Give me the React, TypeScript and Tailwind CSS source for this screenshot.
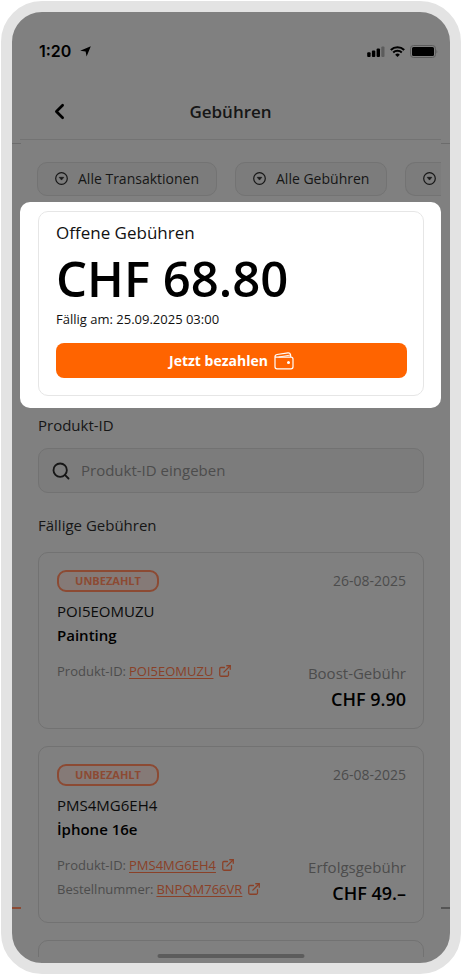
import { ChevronLeft, ExternalLink, Search } from 'lucide-react';

type FeeLink = {
  label: string;
  value: string;
};

type Fee = {
  code: string;
  title: string;
  date: string;
  kind: string;
  amount: string;
  links: FeeLink[];
};

const fees: Fee[] = [
  {
    code: 'POI5EOMUZU',
    title: 'Painting',
    date: '26-08-2025',
    kind: 'Boost-Gebühr',
    amount: 'CHF 9.90',
    links: [{ label: 'Produkt-ID:', value: 'POI5EOMUZU' }],
  },
  {
    code: 'PMS4MG6EH4',
    title: 'İphone 16e',
    date: '26-08-2025',
    kind: 'Erfolgsgebühr',
    amount: 'CHF 49.–',
    links: [
      { label: 'Produkt-ID:', value: 'PMS4MG6EH4' },
      { label: 'Bestellnummer:', value: 'BNPQM766VR' },
    ],
  },
];

function StatusBar() {
  return (
    <div className="flex h-[78px] shrink-0 items-center justify-between pl-[19px] pr-[3px]">
      <div className="flex items-center gap-[9px]">
        <span className="font-[Inter,sans-serif] text-base font-semibold text-black">1:20</span>
        <svg className="size-[11px]" viewBox="0 0 11 11" aria-hidden="true">
          <path d="M10.8 0.2 L6.6 10.6 L5.6 5.6 L0.2 4.8 Z" fill="#000" />
        </svg>
      </div>
      <div className="flex items-center gap-[5px]">
        <svg className="h-[11px] w-[18px]" viewBox="0 0 18 11" aria-hidden="true">
          <rect x="0.2" y="6.2" width="3.4" height="4.8" rx="1" />
          <rect x="4.9" y="4.6" width="3.4" height="6.4" rx="1" />
          <rect x="9.6" y="2.4" width="3.4" height="8.6" rx="1" />
          <rect x="14.3" y="0.5" width="3.2" height="10.5" rx="1" fill="#5c5c5c" />
        </svg>
        <svg className="h-[11px] w-[15px]" viewBox="0 0 15 11" aria-hidden="true">
          <path d="M0.8 3.9 A9.6 9.6 0 0 1 14.2 3.9" fill="none" stroke="#000" strokeWidth="2.1" />
          <path d="M3.2 6.5 A6.2 6.2 0 0 1 11.8 6.5" fill="none" stroke="#000" strokeWidth="2" />
          <path d="M7.5 11 L5.2 8.7 A3.3 3.3 0 0 1 9.8 8.7 Z" />
        </svg>
        <svg className="h-[13px] w-[28px]" viewBox="0 0 28 13" aria-hidden="true">
          <rect x="0.5" y="0.5" width="25" height="12" rx="3" fill="none" stroke="#5c5c5c" />
          <rect x="2" y="2" width="22" height="9" rx="1.5" />
          <path d="M26.5 4.5 q1.5 2 0 4 z" fill="#5c5c5c" />
        </svg>
      </div>
    </div>
  );
}

function DropIcon() {
  return (
    <svg className="size-[13px] shrink-0" viewBox="0 0 13 13" aria-hidden="true">
      <circle cx="6.5" cy="6.5" r="5.8" fill="none" stroke="#161616" strokeWidth="1.2" />
      <path d="M4.2 5.3 h4.6 l-2.3 2.8 z" fill="#161616" stroke="#161616" strokeWidth="0.6" strokeLinejoin="round" />
    </svg>
  );
}

function Chip({ label }: { label: string }) {
  return (
    <button className="flex h-[34px] shrink-0 items-center gap-[10px] rounded-[10px] border border-[#737373] bg-[#7c7c7c] px-[17px] text-sm font-medium whitespace-nowrap text-[#161616]">
      <DropIcon />
      {label}
    </button>
  );
}

function WalletIcon() {
  return (
    <svg className="h-[18px] w-5" viewBox="0 0 20 18" fill="none" stroke="#fff" strokeWidth="1.2" strokeLinejoin="round" strokeLinecap="round" aria-hidden="true">
      <path d="M1 4.6 V14.8 Q1 16.8 3 16.8 H17 Q19 16.8 19 14.8 V7.2 Q19 5.2 17 5.2 H3 Q1 5.2 1 4.1 Q1.2 2.8 3 2.5 L14 0.9 Q16 0.7 16.5 2.5 L16.9 5.2" />
      <path d="M5 5 L15.6 3.2" strokeWidth="0.9" />
      <circle cx="14.5" cy="10.6" r="0.9" fill="#fff" />
    </svg>
  );
}

function OpenFees() {
  return (
    <section className="shrink-0 rounded-[10px] bg-white pt-[9px] pr-[17px] pb-3 pl-[18px]">
      <div className="rounded-[10px] border border-[#e6e6e6] pt-[9px] pr-4 pb-[17px] pl-[17px]">
        <h2 className="text-[17px] leading-6 text-[#111]">Offene Gebühren</h2>
        <p className="text-[49px] leading-[66px] font-semibold text-black">CHF 68.80</p>
        <p className="text-[13px] leading-4 font-medium text-[#111]">Fällig am: 25.09.2025 03:00</p>
        <button className="mt-4 flex h-[35px] w-full items-center justify-center gap-[6px] rounded-lg bg-[#ff6400] text-sm font-bold text-white">
          Jetzt bezahlen
          <WalletIcon />
        </button>
      </div>
    </section>
  );
}

function FeeCard({ fee }: { fee: Fee }) {
  return (
    <article className="flex h-[177px] shrink-0 flex-col rounded-[10px] border border-[#727272] pt-[17px] pr-[17px] pb-[15px] pl-[18px]">
      <div className="flex items-center justify-between">
        <span className="flex h-[22px] w-[102px] items-center justify-center rounded-[9px] border-2 border-[#8c4a33] bg-[#857a77] text-[11px] font-bold text-[#8c4a33]">
          UNBEZAHLT
        </span>
        <span className="text-sm text-[#4c4c4c]">{fee.date}</span>
      </div>
      <p className="mt-[7px] text-[15px] leading-6 text-[#0b0b0b]">{fee.code}</p>
      <h3 className="text-[15px] leading-6 font-semibold text-black">{fee.title}</h3>
      <div className="mt-3 flex flex-1 justify-between">
        <ul className="text-[13px] leading-6 whitespace-nowrap text-[#4c4c4c]">
          {fee.links.map((link) => (
            <li key={link.label} className="flex items-center gap-[3px]">
              {link.label}
              <a href="#" className="flex items-center gap-[5px] text-[#8a4128]">
                <span className="underline underline-offset-2">{link.value}</span>
                <ExternalLink size={14} strokeWidth={2.2} />
              </a>
            </li>
          ))}
        </ul>
        <div className="self-end text-right">
          <p className="text-[15px] leading-6 text-[#4c4c4c]">{fee.kind}</p>
          <p className="text-[18px] leading-7 font-semibold text-black">{fee.amount}</p>
        </div>
      </div>
    </article>
  );
}

export default function App() {
  return (
    <div className="h-screen bg-white py-px pl-px font-['Open_Sans','Noto_Sans',sans-serif]">
      <div className="relative flex h-full flex-col overflow-hidden rounded-[41px] border-[11px] border-[#e3e3e3] bg-[#808080] pr-[9px] pb-[6px] pl-2">
        <StatusBar />
        <header className="grid h-[50px] shrink-0 grid-cols-[40px_1fr_40px] items-center border-b border-[#737373] px-5 pb-[6px]">
          <button aria-label="Zurück" className="pl-[7px]">
            <ChevronLeft size={25} strokeWidth={2.6} className="text-black" />
          </button>
          <h1 className="text-center text-[17px] font-semibold text-[#161616]">Gebühren</h1>
        </header>

        <nav className="flex h-[62px] shrink-0 items-center gap-[18px] overflow-hidden pt-4 pb-[1px] pl-[17px]">
          <Chip label="Alle Transaktionen" />
          <Chip label="Alle Gebühren" />
          <button
            aria-label="Weitere Filter"
            className="flex h-[34px] min-w-0 flex-1 items-center rounded-l-[10px] border border-r-0 border-[#737373] bg-[#7c7c7c] pl-[17px]"
          >
            <DropIcon />
          </button>
        </nav>

        <OpenFees />

        <main className="flex min-h-0 flex-1 flex-col overflow-hidden pt-[5px] pr-[17px] pl-[18px]">
          <label htmlFor="product-id" className="text-[15px] leading-6 text-[#161616]">
            Produkt-ID
          </label>
          <div className="mt-[11px] flex h-[45px] shrink-0 items-center gap-[10px] rounded-[10px] border border-[#727272] bg-[#7c7c7c] px-3">
            <Search size={20} strokeWidth={2.2} className="text-[#161616]" />
            <input
              id="product-id"
              type="text"
              placeholder="Produkt-ID eingeben"
              className="min-w-0 flex-1 bg-transparent text-[15px] outline-none placeholder:text-[#4c4c4c]"
            />
          </div>
          <h2 className="mt-5 text-[15px] leading-6 text-[#161616]">Fällige Gebühren</h2>
          <div className="mt-[15px] flex flex-col gap-[17px]">
            {fees.map((fee) => (
              <FeeCard key={fee.code} fee={fee} />
            ))}
            <div className="h-10 shrink-0 rounded-[10px] border border-[#727272]" />
          </div>
        </main>

        <div className="absolute top-[131px] left-0 h-px w-[9px] bg-[#6c6c6c]" />
        <div className="absolute top-[131px] right-0 h-px w-[9px] bg-[#6c6c6c]" />
        <div className="absolute bottom-[54px] left-0 h-[2px] w-[9px] bg-[#8c4a33]" />
        <div className="absolute right-0 bottom-[54px] h-[2px] w-[9px] bg-[#555]" />
        {/* home indicator */}
        <div className="absolute bottom-[5px] left-1/2 h-1 w-[147px] -translate-x-1/2 rounded-full bg-[#5c5c5c]" />
      </div>
    </div>
  );
}
